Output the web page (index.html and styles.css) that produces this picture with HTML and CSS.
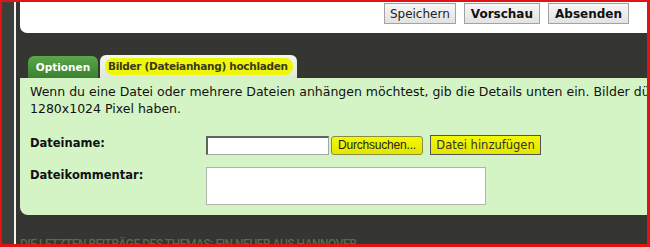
FILE: index.html
```html
<!DOCTYPE html>
<html lang="de">
<head>
<meta charset="utf-8">
<link rel="stylesheet" href="styles.css">
</head>
<body>
<div class="frame">
  <div class="side"></div>
  <div class="rule"></div>
  <div class="main">
    <div class="toppanel">
      <button class="btn">Speichern</button>
      <button class="btn bold">Vorschau</button>
      <button class="btn bold">Absenden</button>
    </div>
    <div class="tabs">
      <div class="tab tab-green">Optionen</div>
      <div class="tab tab-active"><span class="hl">Bilder (Dateianhang) hochladen</span></div>
    </div>
    <div class="panel">
      <p class="intro">Wenn du eine Datei oder mehrere Dateien anhängen möchtest, gib die Details unten ein. Bilder dü</p>
      <p class="intro">1280x1024 Pixel haben.</p>
      <div class="row">
        <label class="lbl">Dateiname:</label>
        <div class="field">
          <input class="file" type="text">
          <button class="ybtn browse">Durchsuchen...</button>
          <button class="ybtn add">Datei hinzufügen</button>
        </div>
      </div>
      <div class="row row2">
        <label class="lbl">Dateikommentar:</label>
        <textarea class="comment"></textarea>
      </div>
    </div>
    <div class="footer">Die letzten Beiträge des Themas: Ein neuer aus Hannover</div>
  </div>
</div>
</body>
</html>
```
FILE: styles.css
```css
* { box-sizing: border-box; }
html, body { margin: 0; padding: 0; }
body { width: 650px; height: 247px; overflow: hidden; background: #353531; }
.frame {
  width: 650px; height: 247px;
  border-style: solid; border-color: #e21313;
  border-width: 2px 3px 3px 2px;
  display: flex; overflow: hidden;
  background: #353531;
}
.side { width: 12px; background: #3b3e3a; flex: none; }
.rule { width: 2px; background: #f4f4f2; flex: none; }
.main { flex: 1; margin-left: 4px; min-width: 0; display: flex; flex-direction: column; overflow: hidden; }
.main > * { flex: none; }
.toppanel {
  height: 31px; background: #fff; border-bottom-left-radius: 7px;
  display: flex; justify-content: flex-end; align-items: flex-start;
  gap: 8px; padding: 1px 18px 0 0;
}
.btn {
  font: 12px "DejaVu Sans", Verdana, sans-serif; color: #222;
  height: 21px; padding: 0 5px; margin: 0;
  background: linear-gradient(#f6f6f6, #e2e2e2);
  border: 1px solid #a2a2a2;
}
.btn.bold { font-weight: bold; color: #111; padding: 0 6px; }
.tabs { display: flex; align-items: flex-end; gap: 2px; margin-top: 21px; padding-left: 8px; height: 24px; }
.tab {
  font: bold 10.5px "DejaVu Sans", Verdana, sans-serif; white-space: nowrap;
  border-radius: 6px 6px 0 0; height: 22px;
  display: flex; align-items: center;
}
.tab-green {
  width: 70px; justify-content: center; color: #fff;
  background: linear-gradient(#5aa84a, #3b8030);
}
.tab-active {
  width: 197px; height: 23px; color: #3a3a1a; padding-left: 8px;
  background: linear-gradient(#f2f6ee, #dfe9d8);
  letter-spacing: -0.3px;
}
.hl { background: #eef70a; padding: 2px 5px 3px 3px; border-radius: 8px; margin-left: -3px; }
.panel {
  height: 137px; background: #d4f4c5; border-bottom-left-radius: 8px;
  padding: 5px 0 0 10px; overflow: hidden;
}
.intro {
  margin: 0; font: 12.5px/17px "DejaVu Sans", Verdana, sans-serif; color: #111;
  white-space: nowrap;
}
.row { display: flex; margin-top: 18px; }
.row2 { margin-top: 12px; }
.lbl { width: 176px; flex: none; font: bold 11.5px "DejaVu Sans", Verdana, sans-serif; color: #111; padding-top: 1px; }
.field { display: flex; align-items: center; gap: 2px; }
.file {
  width: 123px; height: 19px; margin: 0; background: #fff;
  border: 1px solid #a4a8a0; border-top: 2px solid #5f655c; border-left: 2px solid #5f655c;
}
.ybtn {
  font: 12px "Liberation Sans", Arial, sans-serif; color: #222; white-space: nowrap;
  height: 19px; margin: 0; background: linear-gradient(#f4f800, #e2e600);
  border: 1px solid #8a8a40; padding: 0;
}
.browse { width: 92px; border-radius: 3px; letter-spacing: -0.2px; }
.add { margin-left: 5px; width: 111px; height: 20px; font: 11.5px "DejaVu Sans", Verdana, sans-serif; color: #333; border: 1px solid #555; border-radius: 0; }
.comment {
  width: 280px; height: 38px; margin: 0; resize: none; background: #fff;
  border: 1px solid #b0b4ac;
}
.footer {
  margin-top: 22px; font: 500 12px "Roboto", sans-serif; color: #52704a;
  text-transform: uppercase; white-space: nowrap; letter-spacing: -0.5px;
}
```
